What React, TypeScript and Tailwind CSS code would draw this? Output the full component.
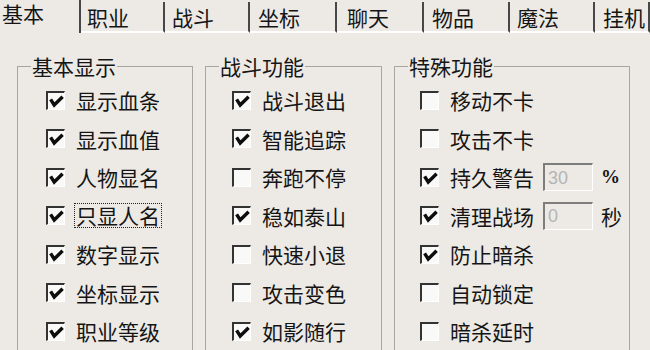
import React from 'react';

type Item = { label: string; checked: boolean; focus?: boolean; input?: string; unit?: string };

const tabs = [
  { label: '基本', cls: 'w-[81px] pl-[2px] pt-[1px] h-[33px]', sel: true },
  { label: '职业', cls: 'w-[84px] pl-[6px] pt-[3px] h-[31px]' },
  { label: '战斗', cls: 'w-[85px] pl-[7px] pt-[3px] h-[31px]' },
  { label: '坐标', cls: 'w-[87px] pl-[8px] pt-[3px] h-[31px]' },
  { label: '聊天', cls: 'w-[87px] pl-[10px] pt-[3px] h-[31px]' },
  { label: '物品', cls: 'w-[86px] pl-[8px] pt-[3px] h-[31px]' },
  { label: '魔法', cls: 'w-[85px] pl-[7px] pt-[3px] h-[31px]' },
  { label: '挂机', cls: 'flex-1 pl-[8px] pt-[3px] h-[31px]' },
];

const groups: { title: string; w: string; pl: string; items: Item[] }[] = [
  {
    title: '基本显示',
    w: 'w-[176px]',
    pl: 'pl-[28px]',
    items: [
      { label: '显示血条', checked: true },
      { label: '显示血值', checked: true },
      { label: '人物显名', checked: true },
      { label: '只显人名', checked: true, focus: true },
      { label: '数字显示', checked: true },
      { label: '坐标显示', checked: true },
      { label: '职业等级', checked: true },
    ],
  },
  {
    title: '战斗功能',
    w: 'w-[177px]',
    pl: 'pl-[26px]',
    items: [
      { label: '战斗退出', checked: true },
      { label: '智能追踪', checked: true },
      { label: '奔跑不停', checked: false },
      { label: '稳如泰山', checked: true },
      { label: '快速小退', checked: false },
      { label: '攻击变色', checked: false },
      { label: '如影随行', checked: true },
    ],
  },
  {
    title: '特殊功能',
    w: 'w-[236px]',
    pl: 'pl-[25px]',
    items: [
      { label: '移动不卡', checked: false },
      { label: '攻击不卡', checked: false },
      { label: '持久警告', checked: true, input: '30', unit: '%' },
      { label: '清理战场', checked: true, input: '0', unit: '秒' },
      { label: '防止暗杀', checked: true },
      { label: '自动锁定', checked: false },
      { label: '暗杀延时', checked: false },
    ],
  },
];

function Box({ checked }: { checked: boolean }) {
  return (
    <span className="block w-[19px] h-[19px] shrink-0 border-t-2 border-l-2 border-r border-b border-t-[#333333] border-l-[#333333] border-r-white border-b-white bg-[#f9f9f7]">
      {checked && (
        <svg viewBox="0 0 16 16" className="block w-[16px] h-[16px]">
          <path d="M2.6 6.4 L6.2 12 L14.6 3.8" fill="none" stroke="#0d0d0d" strokeWidth="3.4" strokeLinejoin="miter" />
        </svg>
      )}
    </span>
  );
}

export default function App() {
  return (
    <div className="w-[650px] h-[350px] overflow-hidden bg-[#edeae5] text-[#151515] font-['Noto_Sans_CJK_SC','Noto_Sans',sans-serif] text-[21px] leading-[24px]">
      <div className="flex items-end h-[33px]">
        {tabs.map((t) => (
          <div
            key={t.label}
            className={
              t.cls +
              ' shrink-0 border-r-2 border-r-[#474747] ' +
              (t.sel ? '' : 'border-b-2 border-b-white')
            }
          >
            <span className="block">{t.label}</span>
          </div>
        ))}
      </div>
      <div className="flex gap-[12px] pl-[17px] pt-[21px]">
        {groups.map((g) => (
          <fieldset key={g.title} className={g.w + ' shrink-0 border border-[#a9a6a0] pt-[3px] pb-[20px]'}>
            <legend className="ml-[13px] px-[1px] leading-[24px]">{g.title}</legend>
            <div className={'flex flex-col ' + g.pl}>
              {g.items.map((it) => (
                <div key={it.label} className="flex items-center h-[38.5px] gap-[11px]">
                  <Box checked={it.checked} />
                  {it.focus ? (
                    <span className="-ml-[2px] border border-dotted border-[#222] px-[1px] leading-[23px]">{it.label}</span>
                  ) : (
                    <span>{it.label}</span>
                  )}
                  {it.input !== undefined && (
                    <>
                      <span className="-ml-[2px] flex items-center w-[50px] h-[28px] border-t-2 border-l-2 border-r border-b border-t-[#7d7d7d] border-l-[#7d7d7d] border-r-white border-b-white pl-[3px] font-['Liberation_Sans',sans-serif] text-[18px] text-[#b4b4b4]">
                        {it.input}
                      </span>
                      <span className={'-ml-[3px] ' + (it.unit === '%' ? "font-['Liberation_Serif',serif] text-[19px] font-bold" : '')}>
                        {it.unit}
                      </span>
                    </>
                  )}
                </div>
              ))}
            </div>
          </fieldset>
        ))}
      </div>
    </div>
  );
}
